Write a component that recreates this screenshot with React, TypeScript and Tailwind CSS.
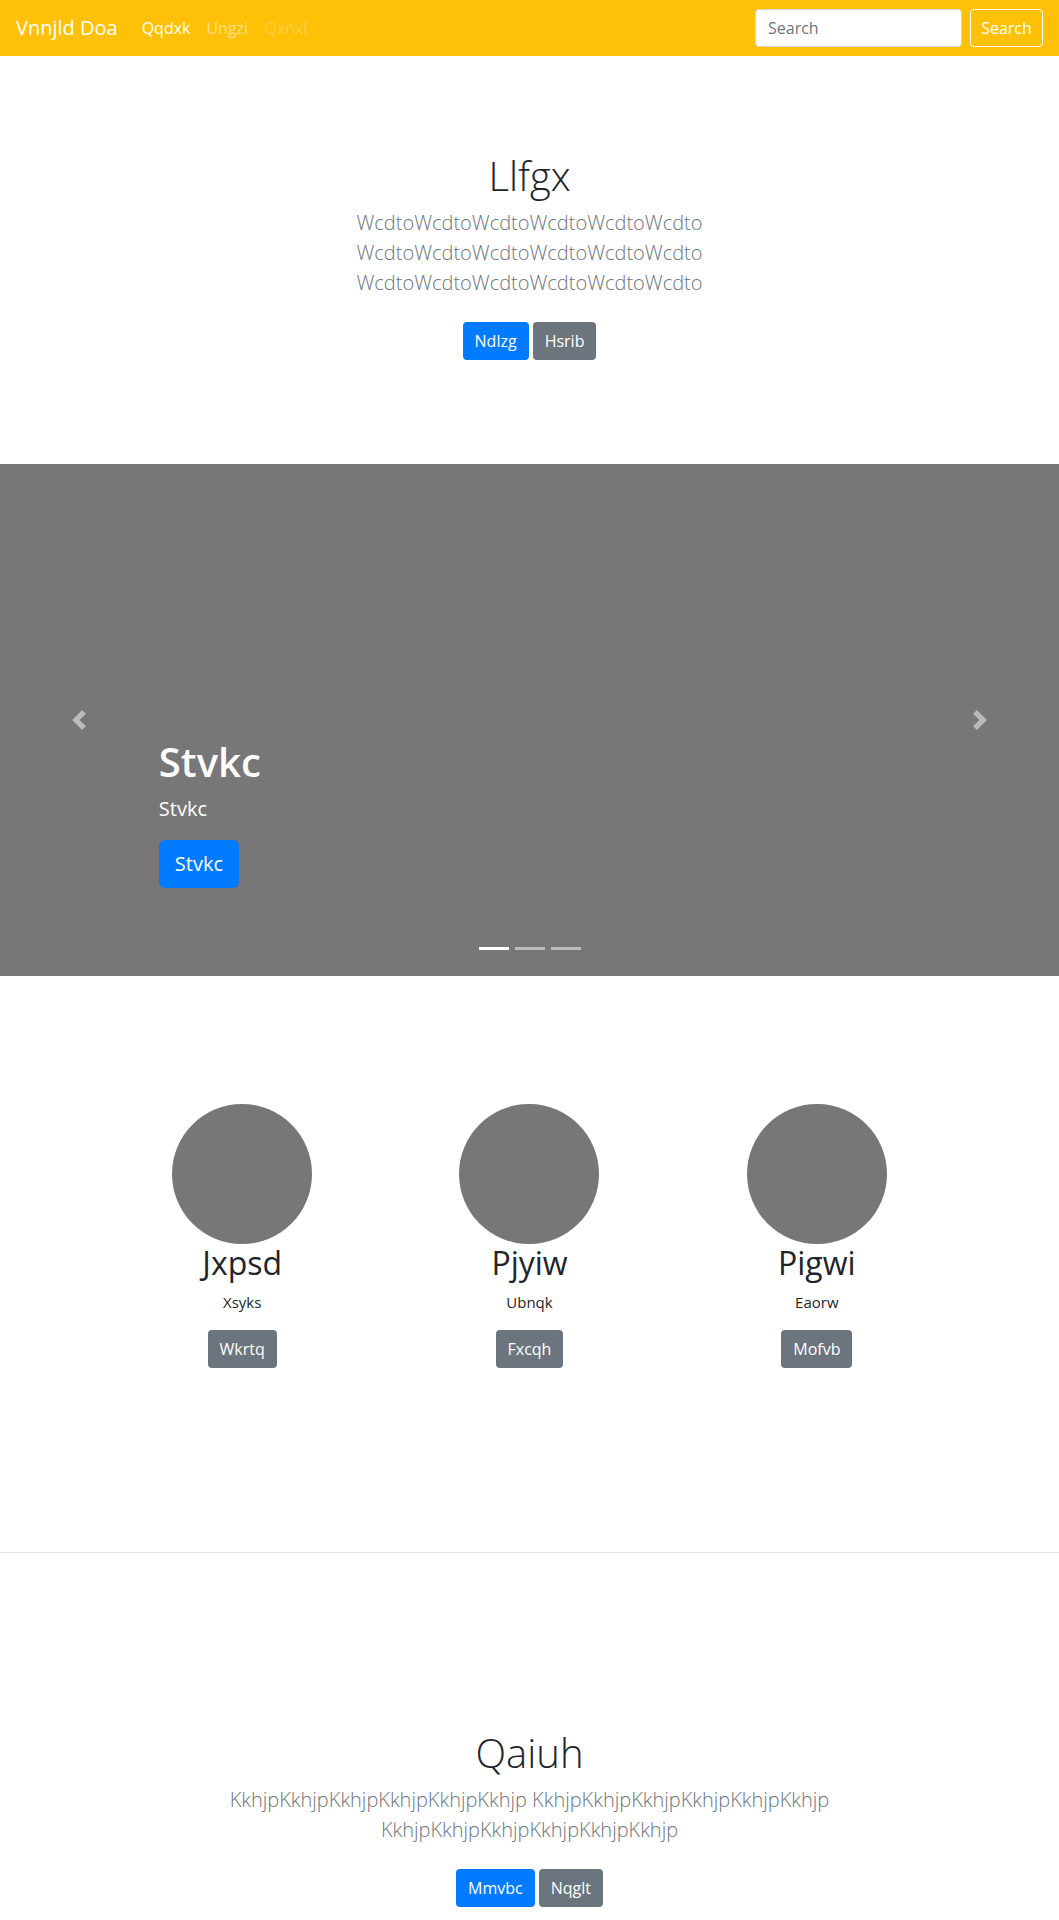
import React from 'react'

const team = [
  { name: 'Jxpsd', role: 'Xsyks', action: 'Wkrtq' },
  { name: 'Pjyiw', role: 'Ubnqk', action: 'Fxcqh' },
  { name: 'Pigwi', role: 'Eaorw', action: 'Mofvb' },
]

function Navbar() {
  return (
    <nav className="h-14 bg-[#ffc107] flex items-center px-4">
      <span className="text-xl text-white mr-4 leading-[30px]">Vnnjld Doa</span>
      <div className="flex items-center">
        <a className="px-2 py-2 text-white">Qqdxk</a>
        <a className="px-2 py-2 text-white/50">Ungzi</a>
        <a className="px-2 py-2 text-white/25">Qxnxl</a>
      </div>
      <form className="ml-auto flex items-center" onSubmit={(e) => e.preventDefault()}>
        <input
          type="text"
          placeholder="Search"
          className="w-[207px] h-[38px] mr-2 px-3 rounded bg-white border border-[#ced4da] text-base text-[#495057] placeholder:text-[#6c757d] outline-none"
        />
        <button className="w-[73px] h-[38px] rounded border border-white text-white text-base">Search</button>
      </form>
    </nav>
  )
}

function Intro({ title, text, primary, secondary }: { title: string; text: string; primary: string; secondary: string }) {
  return (
    <div className="text-center">
      <h1 className="text-[40px] leading-[48px] font-light text-[#212529] mb-2">{title}</h1>
      <p className="mx-auto max-w-[600px] text-xl leading-[30px] font-light text-[#6c757d]">{text}</p>
      <div className="mt-6 flex justify-center gap-1">
        <a className="h-[38px] px-3 flex items-center rounded bg-[#007bff] text-white">{primary}</a>
        <a className="h-[38px] px-3 flex items-center rounded bg-[#6c757d] text-white">{secondary}</a>
      </div>
    </div>
  )
}

function Carousel() {
  return (
    <div className="relative h-[512px] bg-[#777777]">
      <div className="absolute left-0 top-0 bottom-0 w-[15%] flex items-center justify-center">
        <svg width="20" height="20" viewBox="0 0 8 8" className="fill-white opacity-50">
          <path d="M5.25 0l-4 4 4 4 1.5-1.5-2.5-2.5 2.5-2.5-1.5-1.5z" />
        </svg>
      </div>
      <div className="absolute right-0 top-0 bottom-0 w-[15%] flex items-center justify-center">
        <svg width="20" height="20" viewBox="0 0 8 8" className="fill-white opacity-50">
          <path d="M2.75 0l-1.5 1.5 2.5 2.5-2.5 2.5 1.5 1.5 4-4-4-4z" />
        </svg>
      </div>
      <div className="absolute left-[15%] right-[15%] bottom-[88px] text-white">
        <h1 className="text-[40px] leading-[48px] font-semibold mb-2">Stvkc</h1>
        <p className="text-xl leading-[30px] mb-4">Stvkc</p>
        <a className="inline-flex items-center h-12 px-4 rounded-md bg-[#007bff] text-xl text-white">Stvkc</a>
      </div>
      <div className="absolute left-0 right-0 bottom-[26px] flex justify-center gap-1.5">
        <span className="w-[30px] h-[3px] bg-white" />
        <span className="w-[30px] h-[3px] bg-white/50" />
        <span className="w-[30px] h-[3px] bg-white/50" />
      </div>
    </div>
  )
}

export default function App() {
  return (
    <div className="font-['Open_Sans','Noto_Sans',sans-serif] text-base text-[#212529] bg-white">
      <Navbar />

      <section className="pt-24 pb-[104px]">
        <Intro
          title="Llfgx"
          text="WcdtoWcdtoWcdtoWcdtoWcdtoWcdto WcdtoWcdtoWcdtoWcdtoWcdtoWcdto WcdtoWcdtoWcdtoWcdtoWcdtoWcdto"
          primary="Ndlzg"
          secondary="Hsrib"
        />
      </section>

      <Carousel />

      <section className="pt-32 pb-[184px]">
        <div className="max-w-[862px] mx-auto grid grid-cols-3">
          {team.map((m) => (
            <div key={m.name} className="flex flex-col items-center text-center">
              <div className="w-[140px] h-[140px] rounded-full bg-[#777777]" />
              <h2 className="text-[32px] leading-[38px] text-[#212529]">{m.name}</h2>
              <p className="mt-2 text-[15px] leading-6 text-[#212529]">{m.role}</p>
              <a className="mt-4 h-[38px] px-3 flex items-center rounded bg-[#6c757d] text-white">{m.action}</a>
            </div>
          ))}
        </div>
      </section>

      <hr className="border-0 border-t border-black/10" />

      <section className="pt-[176px] pb-24">
        <Intro
          title="Qaiuh"
          text="KkhjpKkhjpKkhjpKkhjpKkhjpKkhjp KkhjpKkhjpKkhjpKkhjpKkhjpKkhjp KkhjpKkhjpKkhjpKkhjpKkhjpKkhjp"
          primary="Mmvbc"
          secondary="Nqglt"
        />
      </section>
    </div>
  )
}
